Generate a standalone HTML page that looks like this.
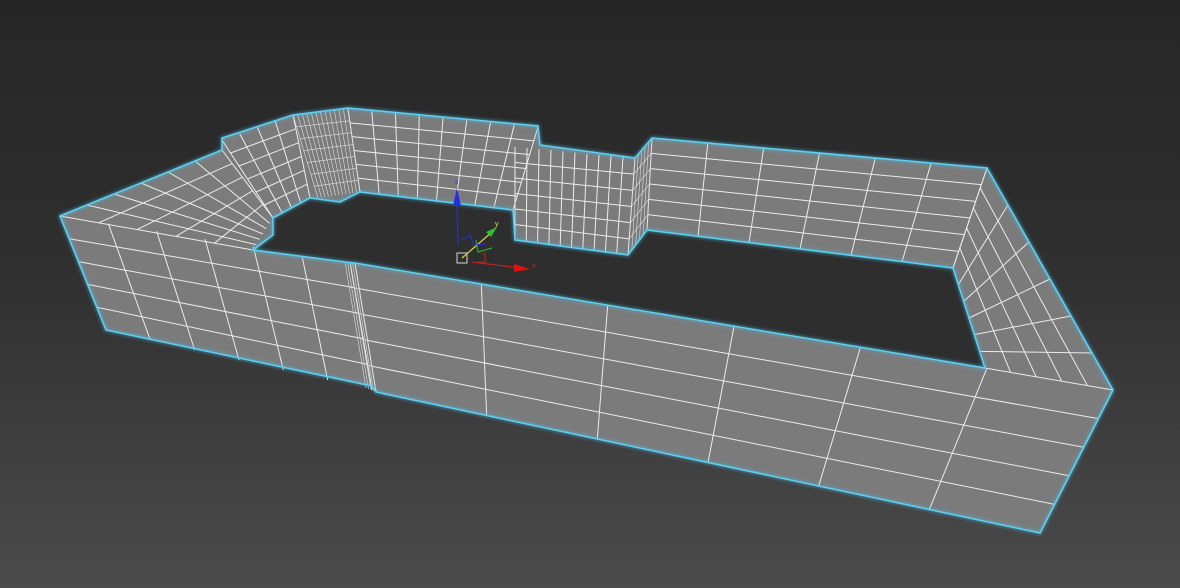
<!DOCTYPE html>
<html><head><meta charset="utf-8"><style>
html,body{margin:0;padding:0;width:1180px;height:588px;overflow:hidden;background:#2a2a2a}
svg{display:block}
</style></head><body>
<svg id="s" width="1180" height="588" viewBox="0 0 1180 588" xmlns="http://www.w3.org/2000/svg">
<defs>
<linearGradient id="bg" x1="0" y1="0" x2="0" y2="1">
<stop offset="0" stop-color="#262626"/><stop offset="0.45" stop-color="#2f2f2f"/><stop offset="1" stop-color="#4b4b4b"/>
</linearGradient>
<filter id="gl" x="-5%" y="-5%" width="110%" height="110%"><feGaussianBlur stdDeviation="1.5"/></filter>
</defs>
<rect width="1180" height="588" fill="url(#bg)"/>
<polygon id="sil" fill="#7b7b7b" points="60,216 222,150 222,138 293,115 348,108 538,126 540,145 635,158 652,138 987,168 1113,390 1040,533 376,392 372,386 106,330"/>
<g id="grid" stroke="#ececec" stroke-width="1" fill="none"></g>
<g id="grid2" stroke="#e0e0e0" stroke-width="0.6" fill="none"></g>
<polygon id="hole" fill="#2e2e2e" points="253,250 273,235 273,218 310,198 340,202 360,192 513,210 515,240 628,255 647,230 953,268 985,368 355,263 345,262"/>
<g fill="none" stroke="#49bde6" stroke-width="3" opacity="0.6" filter="url(#gl)">
<polygon points="60,216 222,150 222,138 293,115 348,108 538,126 540,145 635,158 652,138 987,168 1113,390 1040,533 376,392 372,386 106,330"/>
<polygon points="253,250 273,235 273,218 310,198 340,202 360,192 513,210 515,240 628,255 647,230 953,268 985,368 355,263 345,262"/>
</g>
<g fill="none" stroke="#5fd0f0" stroke-width="1.5">
<polygon points="60,216 222,150 222,138 293,115 348,108 538,126 540,145 635,158 652,138 987,168 1113,390 1040,533 376,392 372,386 106,330"/>
<polygon points="253,250 273,235 273,218 310,198 340,202 360,192 513,210 515,240 628,255 647,230 953,268 985,368 355,263 345,262"/>
</g>
<g stroke-width="1.2" fill="none">
<line x1="458" y1="245" x2="457" y2="200" stroke="#2530c8"/>
<polygon points="457,188 453,206 461,206" fill="#2030e0" stroke="none"/>
<line x1="462" y1="258" x2="492" y2="232" stroke="#d8d840"/>
<polygon points="497,227 486,232 491,237" fill="#30c030" stroke="none"/>
<line x1="472" y1="262" x2="520" y2="268" stroke="#c02020"/>
<polygon points="530,269 514,264 514,272" fill="#e01010" stroke="none"/>
<polyline points="462,240 470,235 474,245 485,244" stroke="#2530c8"/>
<polyline points="476,240 478,252 492,248" stroke="#30a030"/>
<polyline points="484,252 486,262 478,262" stroke="#b02020"/>
<rect x="457" y="253" width="10" height="10" stroke="#bbb" stroke-width="1.2"/>
</g>
<text x="455" y="184" font-family="Liberation Sans,sans-serif" font-size="7" fill="#3040e0">z</text>
<text x="495" y="226" font-family="Liberation Sans,sans-serif" font-size="7" fill="#e0e040">y</text>
<text x="532" y="268" font-family="Liberation Sans,sans-serif" font-size="7" fill="#e02020">x</text>
</svg>
<script>
var g=document.getElementById('grid');
function L(a,b){var l=document.createElementNS('http://www.w3.org/2000/svg','line');l.setAttribute('x1',a[0]);l.setAttribute('y1',a[1]);l.setAttribute('x2',b[0]);l.setAttribute('y2',b[1]);g.appendChild(l);}
function lp(a,b,t){return [a[0]+(b[0]-a[0])*t,a[1]+(b[1]-a[1])*t];}
function Q(tl,tr,bl,br,nu,nv){
for(var i=1;i<nu;i++){var t=i/nu;L(lp(tl,tr,t),lp(bl,br,t));}
for(var j=1;j<nv;j++){var t=j/nv;L(lp(tl,bl,t),lp(tr,br,t));}
L(tl,bl);L(tr,br);}
Q([60,216],[350,262],[106,330],[372,390],6,5);
Q([355,263],[1113,390],[376,392],[1040,533],6,5);
Q([987,168],[1113,390],[953,268],[985,368],6,5);
Q([652,138],[987,168],[647,230],[953,268],6,6);
Q([515,147],[635,158],[515,240],[628,255],10,6);
Q([348,109],[538,127],[360,192],[513,210],8,6);
Q([60,216],[222,150],[253,250],[273,218],6,5);
Q([222,140],[293,115],[273,218],[310,198],4,6);
g=document.getElementById('grid2');
Q([345,262],[355,263],[366,388],[376,392],4,5);
Q([635,158],[652,138],[628,255],[647,230],5,6);
Q([293,115],[348,109],[318,198],[360,192],12,7);
</script>
</body></html>
